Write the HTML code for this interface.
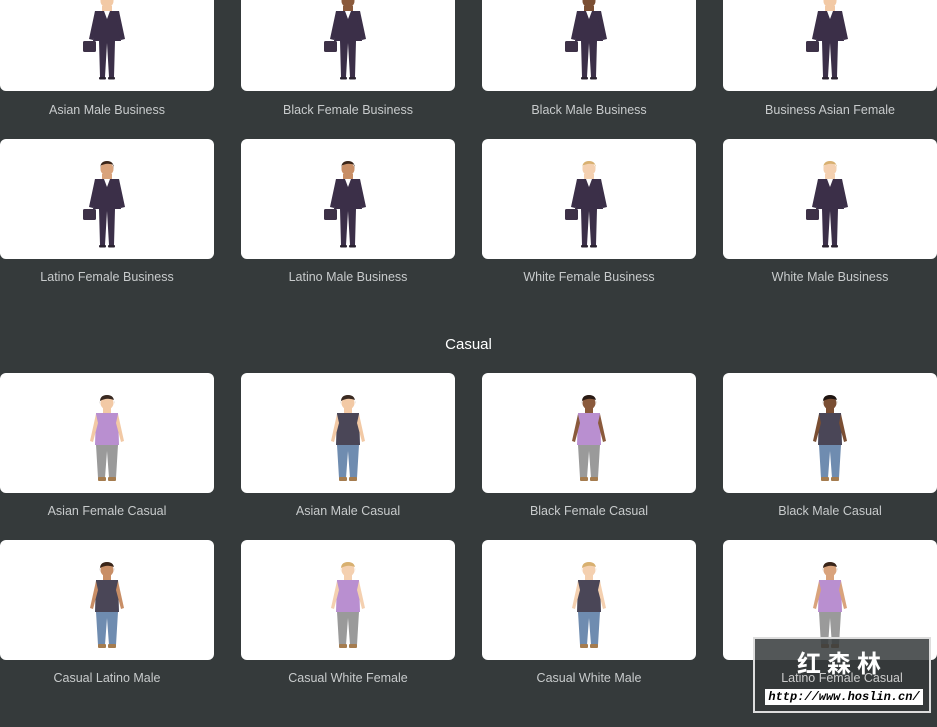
<!DOCTYPE html>
<html><head><meta charset="utf-8"><style>
body{margin:0;width:937px;height:727px;background:#353a3b;overflow:hidden;position:relative;font-family:"Liberation Sans",sans-serif}
.c{position:absolute;width:214px;height:120px;background:#fff;border-radius:6px}
.c svg{position:absolute;left:77px;top:20px}
.l{position:absolute;width:214px;text-align:center;color:#c8cbcc;font-size:12.5px}
.h{position:absolute;left:0;width:937px;top:336px;text-align:center;color:#fff;font-size:15px}
.wm{position:absolute;left:753px;top:637px;width:174px;height:72px;border:2px solid #ddd;background:rgba(53,58,59,.85)}
</style></head><body>
<svg width="0" height="0" style="position:absolute"><defs>
<g id="biz">
<rect x="25" y="15" width="10" height="6" fill="var(--sk)"/>
<path d="M18 20 L42 20 L44 50 L38 50 L37 86 L32 86 L30 52 L28 86 L23 86 L22 50 L16 50Z" fill="#3b2f48"/>
<path d="M27 20 L30 28 L33 20Z" fill="#fff"/>
<path d="M18 20 L12 48 L16 49 L21 30Z M42 20 L48 48 L44 49 L39 30Z" fill="#3b2f48"/>
<rect x="6" y="50" width="13" height="11" rx="1.5" fill="#3d3147"/>
<circle cx="30" cy="10" r="6.5" fill="var(--sk)"/>
<path d="M23 10 Q23 2 30 2 Q37 2 37 10 L37 6 Q30 3 23 7Z" fill="var(--hr)"/>
<rect x="22" y="86" width="7" height="2.5" rx="1" fill="#2a2230"/><rect x="31" y="86" width="7" height="2.5" rx="1" fill="#2a2230"/>
</g>
<g id="cas">
<rect x="26" y="15" width="8" height="6" fill="var(--sk)"/>
<path d="M19 20 L41 20 L42 52 L18 52Z" fill="var(--sh)"/>
<path d="M19 21 L13 48 L16 49 L21 30Z M41 21 L47 48 L44 49 L39 30Z" fill="var(--sk)"/>
<path d="M19 52 L41 52 L39 85 L32 85 L30 58 L28 85 L21 85Z" fill="var(--pn)"/>
<circle cx="30" cy="10" r="6.5" fill="var(--sk)"/>
<path d="M23 11 Q22 2 30 2 Q38 2 37 11 L37 7 Q30 4 23 8Z" fill="var(--hr)"/>
<rect x="21" y="84" width="8" height="4" rx="1" fill="#a57c4f"/><rect x="31" y="84" width="8" height="4" rx="1" fill="#a57c4f"/>
</g></defs></svg>

<div class="c" style="left:0;top:-29px"><svg width="60" height="92"><use href="#biz" style="--sk:#f2c9a5;--hr:#3a2a22"/></svg></div>
<div class="c" style="left:241px;top:-29px"><svg width="60" height="92"><use href="#biz" style="--sk:#8a5a3c;--hr:#2a1a14"/></svg></div>
<div class="c" style="left:482px;top:-29px"><svg width="60" height="92"><use href="#biz" style="--sk:#7a4e33;--hr:#1f1511"/></svg></div>
<div class="c" style="left:723px;top:-29px"><svg width="60" height="92"><use href="#biz" style="--sk:#f2c9a5;--hr:#3a2a22"/></svg></div>
<div class="l" style="left:0;top:103px">Asian Male Business</div>
<div class="l" style="left:241px;top:103px">Black Female Business</div>
<div class="l" style="left:482px;top:103px">Black Male Business</div>
<div class="l" style="left:723px;top:103px">Business Asian Female</div>

<div class="c" style="left:0;top:139px"><svg width="60" height="92"><use href="#biz" style="--sk:#d9a37c;--hr:#3a2519"/></svg></div>
<div class="c" style="left:241px;top:139px"><svg width="60" height="92"><use href="#biz" style="--sk:#c88e66;--hr:#3a2519"/></svg></div>
<div class="c" style="left:482px;top:139px"><svg width="60" height="92"><use href="#biz" style="--sk:#f4d0b0;--hr:#d8b070"/></svg></div>
<div class="c" style="left:723px;top:139px"><svg width="60" height="92"><use href="#biz" style="--sk:#f4d0b0;--hr:#d8b070"/></svg></div>
<div class="l" style="left:0;top:270px">Latino Female Business</div>
<div class="l" style="left:241px;top:270px">Latino Male Business</div>
<div class="l" style="left:482px;top:270px">White Female Business</div>
<div class="l" style="left:723px;top:270px">White Male Business</div>

<div class="h">Casual</div>

<div class="c" style="left:0;top:373px"><svg width="60" height="92"><use href="#cas" style="--sk:#f2c9a5;--hr:#3a2a22;--sh:#b98fd0;--pn:#9a9a9a"/></svg></div>
<div class="c" style="left:241px;top:373px"><svg width="60" height="92"><use href="#cas" style="--sk:#f2c9a5;--hr:#3a2a22;--sh:#4a4657;--pn:#6f8cb0"/></svg></div>
<div class="c" style="left:482px;top:373px"><svg width="60" height="92"><use href="#cas" style="--sk:#8a5a3c;--hr:#2a1a14;--sh:#b98fd0;--pn:#9a9a9a"/></svg></div>
<div class="c" style="left:723px;top:373px"><svg width="60" height="92"><use href="#cas" style="--sk:#7a4e33;--hr:#1f1511;--sh:#4a4657;--pn:#6f8cb0"/></svg></div>
<div class="l" style="left:0;top:504px">Asian Female Casual</div>
<div class="l" style="left:241px;top:504px">Asian Male Casual</div>
<div class="l" style="left:482px;top:504px">Black Female Casual</div>
<div class="l" style="left:723px;top:504px">Black Male Casual</div>

<div class="c" style="left:0;top:540px"><svg width="60" height="92"><use href="#cas" style="--sk:#c88e66;--hr:#3a2519;--sh:#4a4657;--pn:#6f8cb0"/></svg></div>
<div class="c" style="left:241px;top:540px"><svg width="60" height="92"><use href="#cas" style="--sk:#f4d0b0;--hr:#d8b070;--sh:#b98fd0;--pn:#9a9a9a"/></svg></div>
<div class="c" style="left:482px;top:540px"><svg width="60" height="92"><use href="#cas" style="--sk:#f4d0b0;--hr:#d8b070;--sh:#4a4657;--pn:#6f8cb0"/></svg></div>
<div class="c" style="left:723px;top:540px"><svg width="60" height="92"><use href="#cas" style="--sk:#d9a37c;--hr:#3a2519;--sh:#b98fd0;--pn:#9a9a9a"/></svg></div>
<div class="l" style="left:0;top:671px">Casual Latino Male</div>
<div class="l" style="left:241px;top:671px">Casual White Female</div>
<div class="l" style="left:482px;top:671px">Casual White Male</div>

<div class="wm">
<div style="position:absolute;left:0;width:174px;top:10px;text-align:center;color:#fff;font-size:24px;font-weight:bold;letter-spacing:6px;font-family:'Noto Sans CJK SC',sans-serif;line-height:26px">红森林</div>
<div style="position:absolute;left:0;width:174px;top:32px;text-align:center;color:#ccc;font-size:12.5px">Latino Female Casual</div>
<div style="position:absolute;left:10px;top:50px;width:158px;height:16px;background:#fff;color:#000;font:italic bold 12px 'Liberation Mono',monospace;line-height:16px;text-align:center">http://www.hoslin.cn/</div>
</div>
</body></html>
